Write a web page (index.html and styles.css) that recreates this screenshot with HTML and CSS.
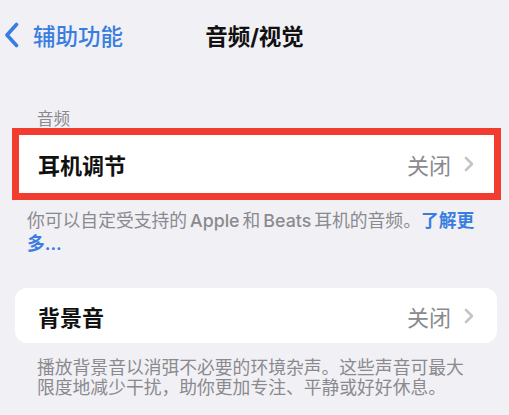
FILE: index.html
```html
<!DOCTYPE html>
<html lang="zh-CN">
<head>
    <meta charset="UTF-8">
    <meta name="viewport" content="width=device-width, initial-scale=1.0">
    <title>音频/视觉</title>
    <link rel="stylesheet" href="styles.css">
</head>
<body>
    <div class="page">
        <div class="nav">
            <a class="back" href="#">
                <svg class="back-icon" width="16" height="26" viewBox="0 0 16 26">
                    <path d="M12.5 2.5 L3 13 L12.5 23.5" fill="none" stroke="#3a7de0" stroke-width="3.6" stroke-linecap="round" stroke-linejoin="round"/>
                </svg>
                <span>辅助功能</span>
            </a>
            <h1 class="title">音频/视觉</h1>
            <div></div>
        </div>

        <div class="section-head">音频</div>
        <div class="group highlight">
            <div class="cell">
                <span class="cell-title">耳机调节</span>
                <span class="cell-value">关闭
                    <svg class="chev" width="10" height="16" viewBox="0 0 10 16">
                        <path d="M2 2 L8 8 L2 14" fill="none" stroke="#c4c4c8" stroke-width="2.6" stroke-linecap="round" stroke-linejoin="round"/>
                    </svg>
                </span>
            </div>
        </div>
        <p class="foot foot-first">你可以自定受支持的<span class="latin">Apple</span>和<span class="latin">Beats</span>耳机的音频。<a class="link" href="#">了解更<br>多...</a></p>

        <div class="group rounded">
            <div class="cell">
                <span class="cell-title">背景音</span>
                <span class="cell-value">关闭
                    <svg class="chev" width="10" height="16" viewBox="0 0 10 16">
                        <path d="M2 2 L8 8 L2 14" fill="none" stroke="#c4c4c8" stroke-width="2.6" stroke-linecap="round" stroke-linejoin="round"/>
                    </svg>
                </span>
            </div>
        </div>
        <p class="foot foot-second">播放背景音以消弭不必要的环境杂声。这些声音可最大限度地减少干扰，助你更加专注、平静或好好休息。</p>
    </div>
</body>
</html>
```

FILE: styles.css
```css
* {
    margin: 0;
    padding: 0;
    box-sizing: border-box;
}

body {
    font-family: "Inter", "Noto Sans CJK SC", sans-serif;
    background: #f1f0f5;
    color: #111;
    height: 415px;
    overflow: hidden;
}

.page {
    width: 509px;
}

.nav {
    display: grid;
    grid-template-columns: 1fr auto 1fr;
    align-items: center;
    height: 70px;
    padding: 0 4px;
}

.back {
    display: flex;
    align-items: center;
    gap: 13px;
    color: #3a7de0;
    text-decoration: none;
    font-size: 22.5px;
    font-weight: 500;
}

.title {
    font-size: 22.5px;
    font-weight: 700;
    color: #111;
}

.section-head {
    margin-top: 40px;
    padding-left: 37px;
    font-size: 16.5px;
    line-height: 18px;
    color: #8a8a8e;
}

.group {
    background: #fff;
}

.highlight {
    margin: 0 8px 0 12px;
    border: 7px solid #f23c30;
}

.rounded {
    margin: 33px 12px 0 15px;
    border-radius: 12px;
}

.cell {
    display: flex;
    align-items: center;
    justify-content: space-between;
}

.highlight .cell {
    height: 58px;
    padding: 0 20px 0 19px;
}

.rounded .cell {
    height: 55px;
    padding: 0 23px 0 23px;
}

.cell-title {
    font-size: 22px;
    font-weight: 700;
}

.cell-value {
    display: flex;
    align-items: center;
    gap: 13px;
    font-size: 22px;
    color: #8a8a8e;
}

.foot {
    font-size: 17.8px;
    color: #8a8a8e;
}

.foot-first {
    margin-top: 9px;
    padding: 0 10px 0 27px;
    line-height: 23px;
}

.foot-second {
    margin-top: 15px;
    padding: 0 40px 0 37px;
    line-height: 20px;
}

.latin {
    margin: 0 3px;
    font-weight: 500;
}

.link {
    color: #3a7de0;
    font-weight: 600;
    text-decoration: none;
}
```
